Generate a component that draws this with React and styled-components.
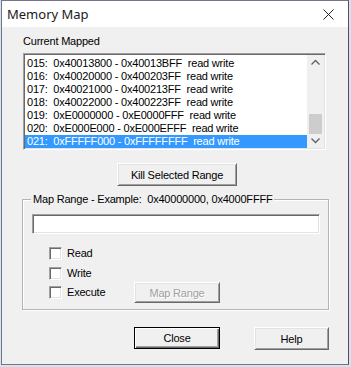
import React from 'react'
import styled, { createGlobalStyle } from 'styled-components'

const GlobalStyle = createGlobalStyle`
  html, body {
    margin: 0;
    padding: 0;
    background: #d6e3ef;
  }
  body {
    width: 351px;
    height: 367px;
    overflow: hidden;
  }
`

const Window = styled.div`
  box-sizing: border-box;
  margin-left: 1px;
  width: 348px;
  height: 365px;
  background: #f0f0f0;
  border: 1px solid #75758a;
  border-right-color: #5e4a66;
  display: flex;
  flex-direction: column;
  font-family: "Liberation Sans", Arial, sans-serif;
  font-size: 11px;
  letter-spacing: -0.2px;
  color: #000;
`

const TitleBar = styled.div`
  height: 26px;
  background: #fff;
  display: flex;
  align-items: center;
  justify-content: space-between;
  padding: 0 14px 0 5px;
  font-family: "Noto Sans", "Open Sans", sans-serif;
  font-size: 13px;
  letter-spacing: 0;
  color: #1a1a1a;
`

const Body = styled.div`
  display: flex;
  flex-direction: column;
  align-items: flex-start;
  padding: 8px 0 0 21px;
`

const Label = styled.div`
  line-height: 13px;
  white-space: pre;
`

const ListBox = styled.div`
  box-sizing: border-box;
  margin-top: 5px;
  width: 303px;
  height: 97px;
  background: #fff;
  border: 1px solid;
  border-color: #a0a0a0 #fff #fff #a0a0a0;
  box-shadow: inset 1px 1px #696969, inset -1px -1px #e3e3e3;
  padding: 1px;
  display: flex;
`

const Rows = styled.div`
  flex: 1;
  padding-top: 2px;
`

const Row = styled.div`
  height: 13px;
  line-height: 13px;
  padding-left: 2px;
  white-space: pre;
  background: ${p => (p.$selected ? '#3399ff' : 'transparent')};
  color: ${p => (p.$selected ? '#fff' : '#000')};
`

const ScrollBar = styled.div`
  width: 17px;
  display: flex;
  flex-direction: column;
  background: #f0f0f0;
`

const Arrow = styled.div`
  height: 17px;
  display: flex;
  align-items: center;
  justify-content: center;
`

const Track = styled.div`
  flex: 1;
  display: flex;
  flex-direction: column;
  align-items: center;
`

const Thumb = styled.div`
  margin-top: 44px;
  width: 13px;
  height: 20px;
  background: #cdcdcd;
`

const Button = styled.button`
  box-sizing: border-box;
  width: ${p => p.$w}px;
  height: ${p => p.$h || 23}px;
  margin: 0;
  padding: 0;
  background: #f0f0f0;
  font-family: "Liberation Sans", Arial, sans-serif;
  font-size: 11px;
  letter-spacing: -0.2px;
  color: ${p => (p.disabled ? '#a0a0a0' : '#000')};
  text-shadow: ${p => (p.disabled ? '1px 1px #fff' : 'none')};
  border: 1px solid;
  border-color: ${p => (p.$default ? '#000' : '#fff #696969 #696969 #fff')};
  box-shadow: ${p =>
    p.$default
      ? 'inset 1px 1px #fff, inset -1px -1px #696969, inset -2px -2px #a0a0a0'
      : 'inset 1px 1px #e3e3e3, inset -1px -1px #a0a0a0'};
`

const KillButton = styled(Button)`
  margin-top: 13px;
  margin-left: 94px;
`

const Group = styled.div`
  box-sizing: border-box;
  margin-top: 13px;
  margin-left: -1px;
  width: 307px;
  border: 1px solid #b4b4b4;
  box-shadow: 1px 1px #fff, inset 1px 1px #fff;
  display: flex;
  flex-direction: column;
  align-items: flex-start;
  padding-bottom: 6px;
`

const Legend = styled.div`
  margin-top: -7px;
  margin-left: 8px;
  padding: 0 2px;
  line-height: 13px;
  background: #f0f0f0;
  white-space: pre;
`

const TextInput = styled.input`
  box-sizing: border-box;
  margin: 8px 0 0 9px;
  width: 288px;
  height: 20px;
  background: #fff;
  border: 1px solid;
  border-color: #a0a0a0 #fff #fff #a0a0a0;
  box-shadow: inset 1px 1px #696969, inset -1px -1px #e3e3e3;
  outline: none;
`

const CheckRow = styled.div`
  display: flex;
  align-items: center;
  margin-top: ${p => p.$top}px;
  margin-left: 26px;
  height: ${p => p.$h || 13}px;
`

const CheckBox = styled.span`
  box-sizing: border-box;
  width: 13px;
  height: 13px;
  background: #fff;
  border: 1px solid;
  border-color: #a0a0a0 #fff #fff #a0a0a0;
  box-shadow: inset 1px 1px #696969, inset -1px -1px #e3e3e3;
`

const CheckLabel = styled.span`
  width: 67px;
  margin-left: 5px;
  line-height: 13px;
`

const Footer = styled.div`
  display: flex;
  gap: 34px;
  margin-top: 17px;
  margin-left: 111px;
`

const rows = [
  '015:  0x40013800 - 0x40013BFF  read write',
  '016:  0x40020000 - 0x400203FF  read write',
  '017:  0x40021000 - 0x400213FF  read write',
  '018:  0x40022000 - 0x400223FF  read write',
  '019:  0xE0000000 - 0xE0000FFF  read write',
  '020:  0xE000E000 - 0xE000EFFF  read write',
  '021:  0xFFFFF000 - 0xFFFFFFFF  read write',
]

function Chevron({ up }) {
  return (
    <svg width="9" height="6" viewBox="0 0 9 6">
      <path
        d={up ? 'M0.5 5.5 L4.5 1.5 L8.5 5.5' : 'M0.5 0.5 L4.5 4.5 L8.5 0.5'}
        fill="none"
        stroke="#606060"
        strokeWidth="1.3"
      />
    </svg>
  )
}

export default function App() {
  return (
    <>
      <GlobalStyle />
      <Window>
        <TitleBar>
          <span>Memory Map</span>
          <svg width="11" height="11" viewBox="0 0 11 11">
            <path d="M0.5 0.5 L10.5 10.5 M10.5 0.5 L0.5 10.5" stroke="#222" strokeWidth="1" />
          </svg>
        </TitleBar>
        <Body>
          <Label>Current Mapped</Label>
          <ListBox>
            <Rows>
              {rows.map((r, i) => (
                <Row key={r} $selected={i === rows.length - 1}>{r}</Row>
              ))}
            </Rows>
            <ScrollBar>
              <Arrow><Chevron up /></Arrow>
              <Track><Thumb /></Track>
              <Arrow><Chevron /></Arrow>
            </ScrollBar>
          </ListBox>
          <KillButton $w={120}>Kill Selected Range</KillButton>
          <Group>
            <Legend>Map Range - Example:  0x40000000, 0x4000FFFF</Legend>
            <TextInput type="text" />
            <CheckRow $top={13}>
              <CheckBox />
              <CheckLabel>Read</CheckLabel>
            </CheckRow>
            <CheckRow $top={7}>
              <CheckBox />
              <CheckLabel>Write</CheckLabel>
            </CheckRow>
            <CheckRow $top={2} $h={21}>
              <CheckBox />
              <CheckLabel>Execute</CheckLabel>
              <Button $w={86} $h={21} disabled>Map Range</Button>
            </CheckRow>
          </Group>
          <Footer>
            <Button $w={86} $h={22} $default>Close</Button>
            <Button $w={75} $h={23}>Help</Button>
          </Footer>
        </Body>
      </Window>
    </>
  )
}
